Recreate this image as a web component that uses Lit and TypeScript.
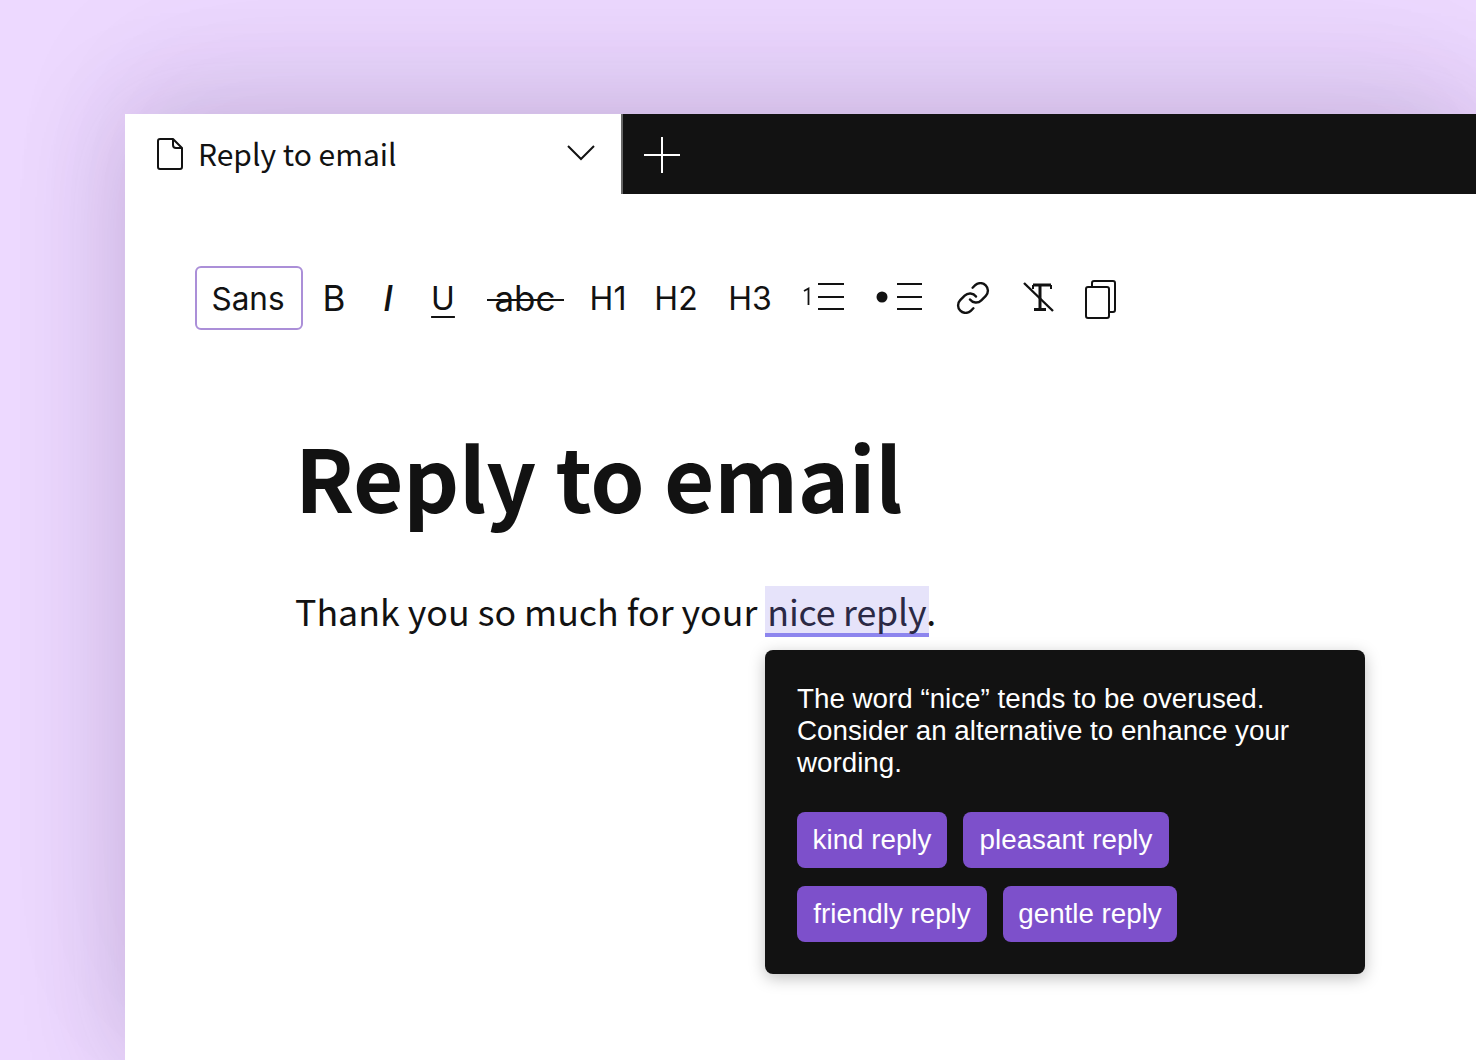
import { LitElement, html, css } from "lit";
import { customElement } from "lit/decorators.js";

@customElement("app-root")
export class AppRoot extends LitElement {
  static styles = css`
    :host { display: block; width: 1476px; height: 1060px; overflow: hidden; background: #edd9ff; position: relative; }
    .page { height: 1060px; box-sizing: border-box; padding: 114px 0 0 125px; }
    .win { background: #fff; height: 946px; box-shadow: 0 0 100px rgba(60, 30, 90, 0.2), 0 -60px 140px rgba(60, 30, 90, 0.05); position: relative; font-family: "Noto Sans CJK SC", "Noto Sans", sans-serif; color: #121212; }
    .tabs { display: flex; height: 80px; background: #121212; }
    .tab { width: 496px; background: #fff; display: flex; align-items: center; box-sizing: border-box; padding-left: 32px; position: relative; }
    .tab-title { font-size: 30px; margin-left: 15px; line-height: 80px; position: relative; top: -1px; }
    .chev { position: absolute; left: 441px; top: 31px; }
    .add { width: 80px; border-left: 2px solid #666; box-sizing: border-box; display: flex; align-items: center; justify-content: center; padding: 2px 0 0 0; }
    .toolbar { display: flex; align-items: center; margin: 72px 0 0 70px; height: 64px; font-family: Inter, "Liberation Sans", sans-serif; font-size: 32px; color: #121212; }
    .sans { box-sizing: border-box; width: 108px; height: 64px; padding-right: 2px; border: 2px solid #ab8fd8; border-radius: 6px; display: flex; align-items: center; justify-content: center; font-size: 31.5px; }
    .t { display: flex; align-items: center; justify-content: center; flex: none; }
    .bold { width: 62px; font-size: 35px; }
    .ital { width: 46px; font-style: italic; font-weight: 500; font-size: 35px; }
    .und { width: 64px; }
    .und span { text-decoration: underline; text-underline-offset: 6px; text-decoration-thickness: 2px; }
    .abc { width: 100px; position: relative; font-size: 35px; }
    .abc::after { content: ""; position: absolute; left: 12px; right: 11px; top: 50%; margin-top: 1px; height: 2px; background: #121212; }
    .h1b { width: 66px; }
    .h2b { width: 70px; }
    .h3b { width: 78px; }
    .doc { padding: 0 0 0 170px; }
    h1 { margin: 90px 0 0 0; font-size: 87px; line-height: 110px; font-weight: 700; letter-spacing: -0.25px; }
    p { margin: 55px 0 0 0; font-size: 35.75px; line-height: 52px; display: flex; align-items: flex-start; }
    .gap { width: 8px; }
    .hl { background: #e6e3fa; border-bottom: 4px solid #8d85ee; color: #2b2945; line-height: 52px; height: 47px; margin-top: 1px; padding: 0 3px 0 2px; letter-spacing: -0.2px; }
    .hl span { position: relative; top: -1px; }
    .dot { margin-left: -3px; }
    .pop { position: absolute; left: 640px; top: 536px; width: 600px; height: 324px; box-sizing: border-box; padding: 33px 32px 0; background: #121212; border-radius: 8px; color: #fff; box-shadow: 0 4px 16px rgba(0,0,0,0.25); font-family: "Liberation Sans", Arial, sans-serif; font-size: 27.75px; line-height: 32px; }
    .msg { margin-bottom: 33px; }
    .row { display: flex; gap: 16px; margin-bottom: 18px; }
    .chip { height: 56px; line-height: 56px; text-align: center; background: #7d50cb; border-radius: 8px; }
    .w150 { width: 150px; } .w206 { width: 206px; } .w190 { width: 190px; } .w174 { width: 174px; }
    svg { flex: none; }
  `;

  render() {
    return html`<div class="page"><div class="win">
      <div class="tabs">
        <div class="tab">
          <svg width="26" height="32" viewBox="0 0 26 32" fill="none" stroke="#121212" stroke-width="2" stroke-linejoin="round"><path d="M3 1H16L25 10V29a2 2 0 0 1-2 2H3a2 2 0 0 1-2-2V3a2 2 0 0 1 2-2Z"/><path d="M16 1V7a3 3 0 0 0 3 3H25"/></svg>
          <span class="tab-title">Reply to email</span>
          <svg class="chev" width="30" height="16" viewBox="0 0 30 16" fill="none" stroke="#121212" stroke-width="2"><path d="M2 1L15 14L28 1"/></svg>
        </div>
        <div class="add">
          <svg width="36" height="36" viewBox="0 0 36 36" stroke="#fff" stroke-width="2"><path d="M18 0V36M0 18H36"/></svg>
        </div>
      </div>
      <div class="toolbar">
        <div class="sans">Sans</div>
        <div class="t bold">B</div>
        <div class="t ital">I</div>
        <div class="t und"><span>U</span></div>
        <div class="t abc">abc</div>
        <div class="t h1b">H1</div>
        <div class="t h2b">H2</div>
        <div class="t h3b">H3</div>
        <svg width="76" height="32" viewBox="0 0 76 32" fill="none" stroke="#121212" stroke-width="2"><path d="M15 9L19.5 6.5V23" stroke-width="1.8"/><path d="M29 2H55M29 15H55M29 27H55"/></svg>
        <svg width="76" height="32" viewBox="0 0 76 32" fill="none" stroke="#121212" stroke-width="2"><circle cx="17" cy="15" r="5.5" fill="#121212" stroke="none"/><path d="M32 2H57M32 15H57M32 27H57"/></svg>
        <svg width="66" height="32" viewBox="0 0 66 32" fill="none" stroke="#121212" stroke-width="1.6" stroke-linecap="round" stroke-linejoin="round"><g transform="translate(14 -2) scale(1.5)"><path d="M10 13a5 5 0 0 0 7.54.54l3-3a5 5 0 0 0-7.07-7.07l-1.72 1.71"/><path d="M14 11a5 5 0 0 0-7.54-.54l-3 3a5 5 0 0 0 7.07 7.07l1.71-1.71"/></g></svg>
        <svg width="64" height="34" viewBox="0 0 64 34" fill="none" stroke="#121212"><path d="M26 4H44M33 4V28M27 28.500H39" stroke-width="3"/><path d="M26 4V8M44 4V8" stroke-width="2"/><path d="M17 2L46 30" stroke-width="2.4"/></svg>
        <svg width="50" height="44" viewBox="0 0 50 44" fill="none" stroke="#121212" stroke-width="2" stroke-linejoin="round"><path d="M21 11V7a2 2 0 0 1 2-2H42a2 2 0 0 1 2 2V34a2 2 0 0 1-2 2H38"/><rect x="15" y="11" width="23" height="31" rx="2" fill="#fff"/></svg>
      </div>
      <div class="doc">
        <h1>Reply to email</h1>
        <p><span>Thank you so much for your</span><span class="gap"></span><span class="hl"><span>nice reply</span></span><span class="dot">.</span></p>
      </div>
      <div class="pop">
        <div class="msg">The word “nice” tends to be overused. Consider an alternative to enhance your wording.</div>
        <div class="row"><span class="chip w150">kind reply</span><span class="chip w206">pleasant reply</span></div>
        <div class="row"><span class="chip w190">friendly reply</span><span class="chip w174">gentle reply</span></div>
      </div>
    </div></div>`;
  }
}
